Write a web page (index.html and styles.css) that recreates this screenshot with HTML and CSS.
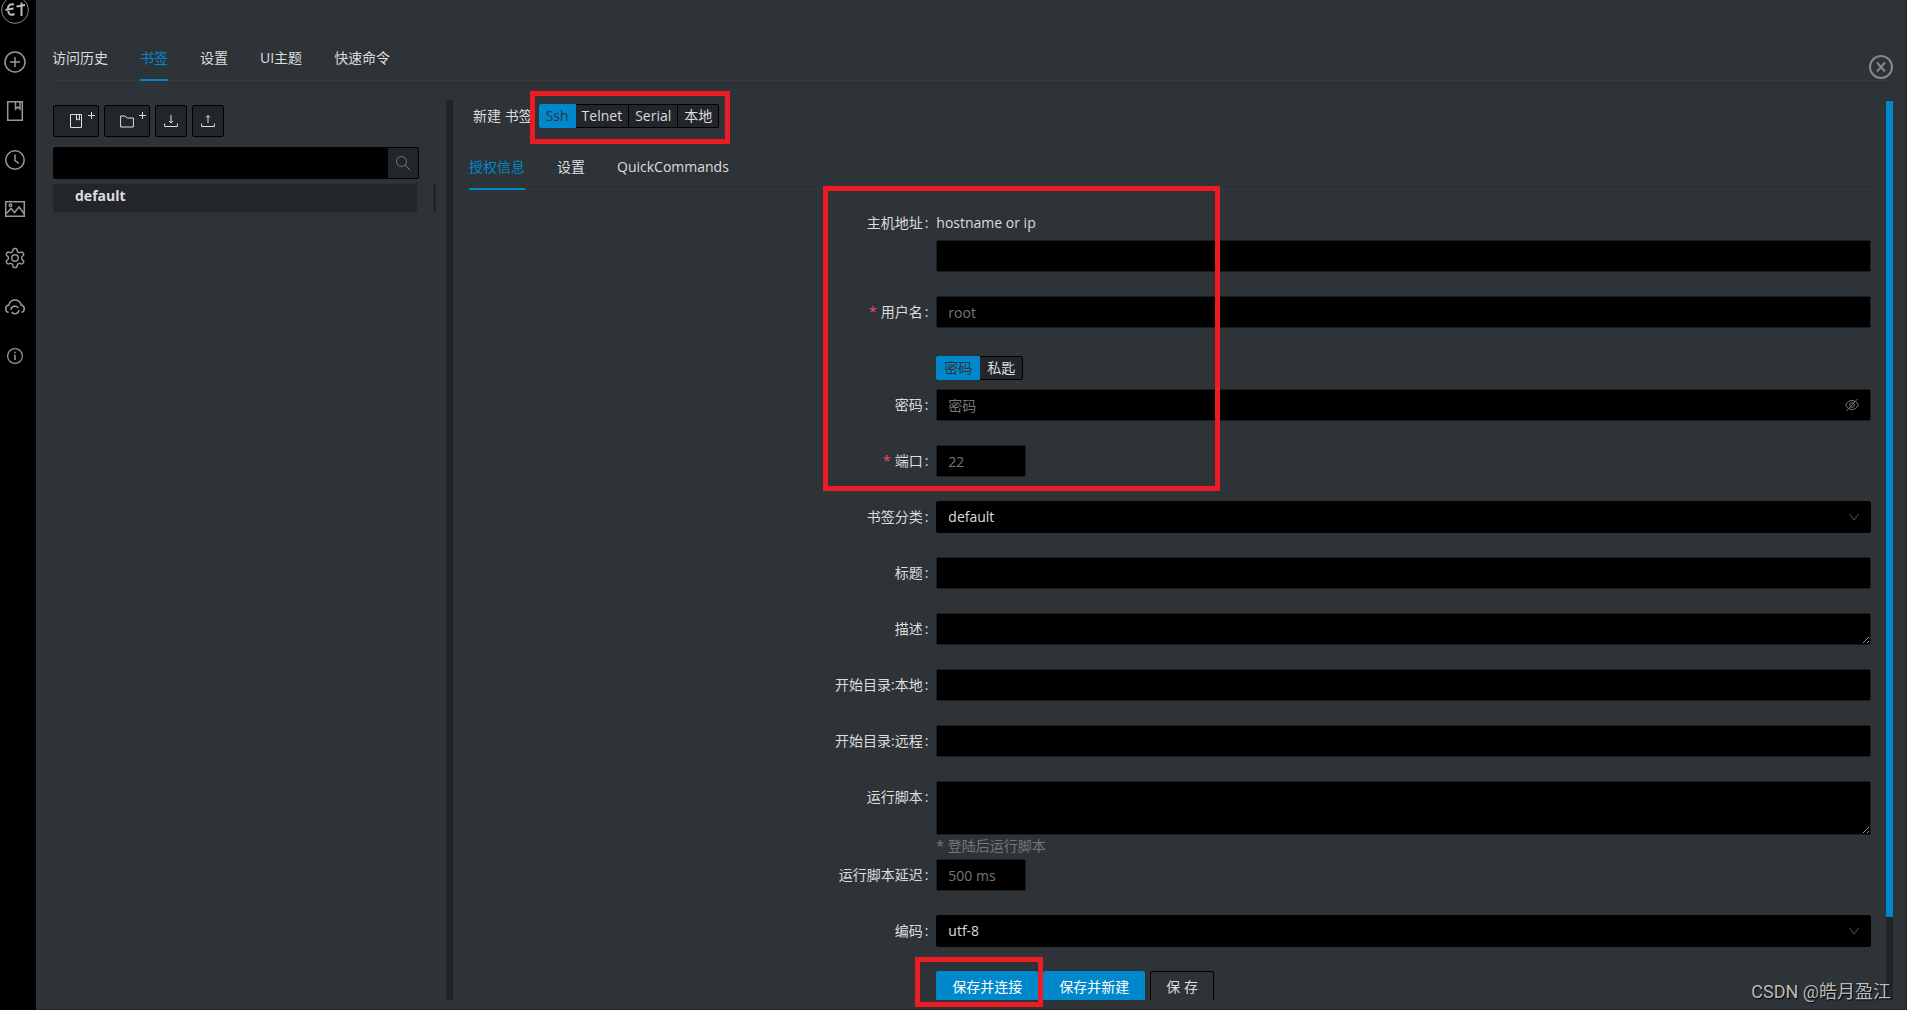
FILE: index.html
```html
<!DOCTYPE html>
<html lang="zh-CN">
<head>
<meta charset="utf-8">
<meta name="viewport" content="width=device-width, initial-scale=1">
<title>electerm</title>
<link rel="stylesheet" href="styles.css">
</head>
<body>
<div class="app">
  <nav class="sidebar" aria-label="主菜单">
    <a class="logo" href="#" aria-label="electerm">
      <svg width="28" height="28" viewBox="0 0 28 28"><circle cx="14" cy="14" r="13.4" stroke-width="1"/><path class="logo-mark" d="M13 8.500C9 7.500 6.500 10 7 13.500C7.300 18 9 20 13.500 18M4.500 14L12.500 12.500M15.500 10.500L24 9M20.500 6.500V20"/></svg>
    </a>
    <button class="side-btn" aria-label="新建"><svg width="22" height="22" viewBox="0 0 22 22"><circle cx="11" cy="11" r="10"/><path d="M11 6v10M6 11h10"/></svg></button>
    <button class="side-btn" aria-label="书签"><svg width="22" height="22" viewBox="0 0 22 22"><path d="M3.700 1.700h14.600v18.600H3.700zM11.500 2v7l2.300-2 2.200 2V2"/></svg></button>
    <button class="side-btn" aria-label="历史"><svg width="22" height="22" viewBox="0 0 22 22"><circle cx="11" cy="11" r="9.200"/><path d="M11 5.500v6l4 3"/></svg></button>
    <button class="side-btn" aria-label="主题"><svg width="22" height="22" viewBox="0 0 22 22"><path d="M1.700 3.700h18.600v14.600H1.700zM2.500 15.500l4.500-5 3.500 4 4.500-5.500 5 6.500"/><circle cx="6.500" cy="7.300" r="1.300"/></svg></button>
    <button class="side-btn" aria-label="设置"><svg width="22" height="22" viewBox="0.500 0.500 23 23"><path d="M12.220 2h-.440a2 2 0 0 0-2 2v.180a2 2 0 0 1-1 1.730l-.430.250a2 2 0 0 1-2 0l-.150-.080a2 2 0 0 0-2.730.730l-.220.380a2 2 0 0 0 .730 2.730l.150.100a2 2 0 0 1 1 1.720v.510a2 2 0 0 1-1 1.740l-.150.090a2 2 0 0 0-.730 2.730l.220.380a2 2 0 0 0 2.730.730l.150-.080a2 2 0 0 1 2 0l.430.250a2 2 0 0 1 1 1.730V20a2 2 0 0 0 2 2h.440a2 2 0 0 0 2-2v-.180a2 2 0 0 1 1-1.730l.430-.250a2 2 0 0 1 2 0l.150.080a2 2 0 0 0 2.730-.730l.220-.390a2 2 0 0 0-.730-2.730l-.150-.080a2 2 0 0 1-1-1.740v-.500a2 2 0 0 1 1-1.740l.150-.090a2 2 0 0 0 .730-2.730l-.220-.380a2 2 0 0 0-2.730-.730l-.150.080a2 2 0 0 1-2 0l-.430-.250a2 2 0 0 1-1-1.730V4a2 2 0 0 0-2-2z"/><circle cx="12" cy="12" r="3.400"/></svg></button>
    <button class="side-btn" aria-label="同步"><svg width="22" height="22" viewBox="0 0 22 22"><path d="M4.500 16.500C2.500 15.800 1.600 14 1.700 12.500C1.800 10.500 3.200 9.300 4.800 9C5.700 5.800 8 4 11 4s5.300 1.800 6.200 5c1.600.300 3 1.500 3.100 3.500c.100 1.500-.800 3.300-2.800 4M7 13.800a4 4 0 0 1 7.300-1.800M15 14.200a4 4 0 0 1-7.300 1.800"/></svg></button>
    <button class="side-btn" aria-label="关于"><svg width="22" height="22" viewBox="0 0 22 22"><circle cx="11" cy="11" r="7.400" stroke-width="1.200"/><path d="M11 9.800V15M11 6.800v1.500"/></svg></button>
  </nav>

  <main class="main">
    <button class="close" aria-label="关闭"><svg width="24" height="24" viewBox="0 0 24 24"><circle cx="12" cy="12" r="11"/><path d="M8 7.500l8 9M16 7.500l-8 9"/></svg></button>
    <div class="tabs tabs-top" role="tablist">
      <button class="tab" role="tab">访问历史</button>
      <button class="tab active" role="tab" aria-selected="true">书签</button>
      <button class="tab" role="tab">设置</button>
      <button class="tab" role="tab">UI主题</button>
      <button class="tab" role="tab">快速命令</button>
    </div>

    <div class="panes">
      <section class="list-pane">
        <div class="list-body">
          <div class="tools">
            <button class="tool tool-wide" aria-label="新建书签"><svg width="16" height="16" viewBox="0 0 16 16"><path d="M2.500 1.500h11v13h-11zM8.500 2v5l1.500-1.300L11.500 7V2"/></svg><svg class="add" width="8" height="8" viewBox="0 0 8 8"><path d="M4.500 1v7M1 4.500h7"/></svg></button>
            <button class="tool tool-wide" aria-label="新建分类"><svg width="16" height="16" viewBox="0 0 16 16"><path d="M1.600 3h4.500l2 2h6.300v9H1.600z"/></svg><svg class="add" width="8" height="8" viewBox="0 0 8 8"><path d="M4.500 1v7M1 4.500h7"/></svg></button>
            <button class="tool" aria-label="导入"><svg width="16" height="16" viewBox="0 0 16 16"><path d="M8 2v8M6 8l2 2 2-2M1.600 10.500v3h12.800v-3"/></svg></button>
            <button class="tool" aria-label="导出"><svg width="16" height="16" viewBox="0 0 16 16"><path d="M8 10V2.500M6 4.500l2-2 2 2M1.600 10.500v3h12.800v-3"/></svg></button>
          </div>
          <div class="search">
            <input class="search-input" type="text" aria-label="搜索">
            <button class="search-btn" aria-label="搜索"><svg width="16" height="16" viewBox="0 0 16 16"><circle cx="6.500" cy="6.500" r="5"/><path d="M10.200 10.200l5 5"/></svg></button>
          </div>
          <div class="tree">
            <div class="tree-item">default</div>
            <div class="tree-scroll"></div>
          </div>
        </div>
        <div class="track"></div>
      </section>

      <section class="form-pane">
        <div class="form-body">
          <div class="form-head">
            <span>新建 书签</span>
            <div class="segments">
              <label class="segment"><input type="radio" name="kind" checked><span>Ssh</span></label>
              <label class="segment"><input type="radio" name="kind"><span>Telnet</span></label>
              <label class="segment"><input type="radio" name="kind"><span>Serial</span></label>
              <label class="segment"><input type="radio" name="kind"><span>本地</span></label>
            </div>
          </div>
          <div class="tabs" role="tablist">
            <button class="tab active" role="tab" aria-selected="true">授权信息</button>
            <button class="tab" role="tab">设置</button>
            <button class="tab" role="tab">QuickCommands</button>
          </div>

          <form class="form">
            <div class="row">
              <label class="label" for="host">主机地址</label>
              <div class="control"><div class="hint">hostname or ip</div><input class="field" id="host" type="text"></div>
            </div>
            <div class="row">
              <label class="label required" for="user">用户名</label>
              <div class="control"><input class="field" id="user" type="text" placeholder="root"></div>
            </div>
            <div class="row row-end">
              <label class="label" for="pass">密码</label>
              <div class="control">
                <div class="segments auth">
                  <label class="segment"><input type="radio" name="auth" checked><span>密码</span></label>
                  <label class="segment"><input type="radio" name="auth"><span>私匙</span></label>
                </div>
                <div class="with-icon">
                  <input class="field" id="pass" type="password" placeholder="密码">
                  <svg class="eye" width="14" height="14" viewBox="0 0 14 14"><path d="M.700 7C2 4 4.300 2.500 7 2.500S12 4 13.300 7C12 10 9.700 11.500 7 11.500S2 10 .700 7zM1.500 13L12.500 1"/><circle cx="7" cy="7" r="2.300"/></svg>
                </div>
              </div>
            </div>
            <div class="row">
              <label class="label required" for="port">端口</label>
              <div class="control"><input class="field field-short" id="port" type="text" placeholder="22"></div>
            </div>
            <div class="row">
              <label class="label" for="category">书签分类</label>
              <div class="control with-icon"><select class="field select" id="category"><option>default</option></select><svg class="chevron" width="12" height="12" viewBox="0 0 12 12"><path d="M1.500 3L6 9l4.500-6"/></svg></div>
            </div>
            <div class="row">
              <label class="label" for="title">标题</label>
              <div class="control"><input class="field" id="title" type="text"></div>
            </div>
            <div class="row">
              <label class="label" for="desc">描述</label>
              <div class="control"><textarea class="field" id="desc" rows="1"></textarea></div>
            </div>
            <div class="row">
              <label class="label" for="local">开始目录:本地</label>
              <div class="control"><input class="field" id="local" type="text"></div>
            </div>
            <div class="row">
              <label class="label" for="remote">开始目录:远程</label>
              <div class="control"><input class="field" id="remote" type="text"></div>
            </div>
            <div class="row row-tight">
              <label class="label" for="script">运行脚本</label>
              <div class="control"><textarea class="field field-tall" id="script" rows="2"></textarea><div class="help">* 登陆后运行脚本</div></div>
            </div>
            <div class="row">
              <label class="label" for="delay">运行脚本延迟</label>
              <div class="control"><input class="field field-short" id="delay" type="text" placeholder="500 ms"></div>
            </div>
            <div class="row">
              <label class="label" for="encode">编码</label>
              <div class="control with-icon"><select class="field select" id="encode"><option>utf-8</option></select><svg class="chevron" width="12" height="12" viewBox="0 0 12 12"><path d="M1.500 3L6 9l4.500-6"/></svg></div>
            </div>
            <div class="row">
              <span></span>
              <div class="actions">
                <button class="btn primary" type="button">保存并连接</button>
                <button class="btn primary" type="button">保存并新建</button>
                <button class="btn" type="button">保 存</button>
              </div>
            </div>
          </form>
        </div>
        <div class="track"><div class="thumb"></div></div>
      </section>
    </div>
  </main>

  <div class="mark mark-kind"></div>
  <div class="mark mark-auth"></div>
  <div class="mark mark-save"></div>
  <div class="watermark">CSDN @皓月盈江</div>
</div>
</body>
</html>
```

FILE: styles.css
```css
* { box-sizing: border-box; }

:root {
  --bg: #2e3338;
  --panel: #22262b;
  --track: #222428;
  --line: #353a3f;
  --text: #ddd;
  --muted: #777;
  --blue: #08c;
  --red: #ed1c24;
}

body {
  margin: 0;
  background: var(--bg);
  color: var(--text);
  color-scheme: dark;
  font: 14px/22px "Open Sans", "Noto Sans CJK SC", sans-serif;
}

button, input, select, textarea { font: inherit; color: inherit; margin: 0; }
button { padding: 0; border: 0; background: none; cursor: pointer; }
svg { display: block; fill: none; stroke: currentColor; }

.app { position: relative; display: flex; height: 100vh; overflow: hidden; }

/* sidebar */
.sidebar {
  display: flex;
  flex-direction: column;
  align-items: center;
  width: 36px;
  padding-right: 6px;
  background: #000;
  color: #999;
}
.sidebar svg { stroke-width: 1.5; }
.logo { margin: -4px 0 13px; color: #888; }
.sidebar .logo-mark { stroke: #bbb; stroke-width: 2; }
.side-btn { display: flex; align-items: center; height: 49px; }

/* main area */
.main {
  position: relative;
  display: flex;
  flex: 1;
  flex-direction: column;
  min-width: 0;
  padding: 35px 13px 9px 16px;
  border: solid #222428;
  border-width: 0 1px 1px 0;
}
.close { position: absolute; top: 55px; right: 13px; color: #888; }
.close svg { stroke-width: 2; }

.tabs { display: flex; gap: 32px; border-bottom: 1px solid var(--line); }
.tabs-top { margin-bottom: 19px; }
.tab { height: 46px; margin-bottom: -1px; padding-top: 2px; border-bottom: 2px solid transparent; }
.tab.active { color: var(--blue); border-color: var(--blue); }

.panes { display: flex; flex: 1; min-height: 0; }
.track { flex: none; width: 7px; background: var(--track); }
.thumb { height: calc(100% - 84px); margin-top: 1px; background: var(--blue); }

/* bookmark list */
.list-pane { display: flex; width: 401px; }
.list-body { flex: 1; padding: 5px 10px 0 1px; }
.tools { display: flex; gap: 5px; margin-bottom: 10px; }
.tool {
  display: flex;
  align-items: center;
  justify-content: center;
  width: 32px;
  height: 32px;
  border: 1px solid #000;
  border-radius: 2px;
  background: var(--panel);
}
.tool-wide { justify-content: flex-end; gap: 3px; width: 46px; padding-right: 3px; }
.add { align-self: flex-start; margin-top: 5px; }
.search { display: flex; margin: 0 17px 5px 0; border: 1px solid #000; border-radius: 2px; }
.search-input { flex: 1; min-width: 0; height: 30px; border: 0; background: #000; }
.search-btn { display: flex; align-items: center; justify-content: center; width: 30px; background: var(--panel); color: var(--muted); }
.tree { display: flex; justify-content: space-between; }
.tree-item { flex: 1; height: 28px; margin-right: 16px; padding-left: 22px; border-radius: 3px; background: var(--panel); font-weight: 700; line-height: 24px; }
.tree-scroll { width: 3px; background: var(--track); }

/* bookmark form */
.form-pane { display: flex; flex: 1; min-width: 0; padding-left: 16px; }
.form-body { flex: 1; min-width: 0; margin-right: 15px; padding-top: 4px; overflow: hidden; }
.form-head { display: flex; gap: 6px; height: 24px; margin-bottom: 16px; padding-left: 4px; line-height: 24px; }

.segments { display: flex; }
.segment { position: relative; display: block; }
.segment input { position: absolute; opacity: 0; }
.segment span {
  display: block;
  height: 24px;
  padding: 0 7px;
  border: 1px solid #000;
  border-left-width: 0;
  background: var(--panel);
  line-height: 22px;
}
.segment:first-child span { border-left-width: 1px; border-radius: 2px 0 0 2px; }
.segment:last-child span { border-radius: 0 2px 2px 0; }
.segment input:checked + span { border-color: var(--blue); background: var(--blue); color: var(--bg); }
.form-head .segment span { padding: 0 6px; }
.auth { padding: 4px 0 9px; }

.form { padding-top: 17px; }
.row { display: grid; grid-template-columns: 1fr 2fr; align-items: start; margin-bottom: 24px; }
.row-end { align-items: end; }
.row-tight { margin-bottom: 0; }
.label { padding-right: 8px; line-height: 32px; text-align: right; }
.label::after { content: ":"; margin-left: 2px; }
.required::before { content: "*"; margin-right: 4px; color: #f5476b; }
.control { min-width: 0; }
.hint { height: 33px; line-height: 32px; }
.help { height: 24px; color: var(--muted); }
.field {
  display: block;
  width: 100%;
  height: 32px;
  padding: 4px 11px;
  border: 1px solid #1c1e20;
  border-radius: 2px;
  background: #000;
  outline: 0;
}
.field::placeholder { color: var(--muted); opacity: 1; }
textarea.field { resize: vertical; }
.field-tall { height: 54px; }
.field-short { width: 90px; }
.select { appearance: none; border-color: #000; }
.with-icon { position: relative; }
.eye { position: absolute; top: 9px; right: 12px; color: var(--muted); }
.chevron { position: absolute; top: 10px; right: 11px; color: #555; }

.actions { display: flex; gap: 5px; }
.btn { height: 32px; padding: 0 15px; border: 1px solid #000; border-radius: 2px; }
.primary { border-color: var(--blue); background: var(--blue); color: #fff; }

/* annotations lying over the page */
.mark { position: absolute; border: 5px solid var(--red); pointer-events: none; }
.mark-kind { left: 530px; top: 91px; width: 200px; height: 53px; }
.mark-auth { left: 823px; top: 186px; width: 397px; height: 305px; }
.mark-save { left: 915px; top: 957px; width: 128px; height: 50px; }
.watermark {
  position: absolute;
  right: 16px;
  bottom: 6px;
  color: #bbb;
  font: 18px/24px Roboto, "Noto Sans CJK SC", sans-serif;
  text-shadow: 1px 1px 1px #000;
}
```
